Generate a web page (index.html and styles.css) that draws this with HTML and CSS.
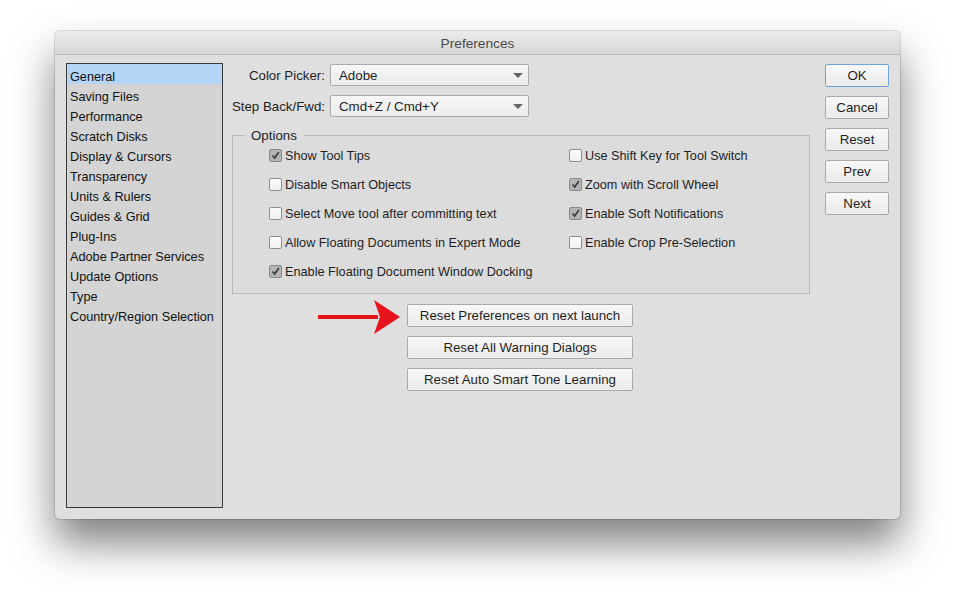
FILE: index.html
```html
<!DOCTYPE html>
<html lang="en">
<head>
    <meta charset="UTF-8">
    <title>Preferences</title>
    <link rel="stylesheet" href="styles.css">
</head>
<body>
    <div class="window">
        <!-- Title Bar -->
        <div class="titlebar">Preferences</div>

        <div class="window-body">
            <!-- Category List -->
            <ul class="category-list">
                <li class="selected">General</li>
                <li>Saving Files</li>
                <li>Performance</li>
                <li>Scratch Disks</li>
                <li>Display &amp; Cursors</li>
                <li>Transparency</li>
                <li>Units &amp; Rulers</li>
                <li>Guides &amp; Grid</li>
                <li>Plug-Ins</li>
                <li>Adobe Partner Services</li>
                <li>Update Options</li>
                <li>Type</li>
                <li>Country/Region Selection</li>
            </ul>

            <!-- General Settings -->
            <div class="settings">
                <div class="field-row">
                    <label class="field-label">Color Picker:</label>
                    <div class="select">Adobe<span class="caret"></span></div>
                </div>
                <div class="field-row">
                    <label class="field-label">Step Back/Fwd:</label>
                    <div class="select">Cmd+Z / Cmd+Y<span class="caret"></span></div>
                </div>

                <fieldset class="options">
                    <legend>Options</legend>
                    <div class="option-grid">
                        <div class="option"><span class="cb checked"><svg viewBox="0 0 13 13"><path d="M3 6.5 L5.5 9.5 L10.5 2.5" /></svg></span>Show Tool Tips</div>
                        <div class="option"><span class="cb"></span>Use Shift Key for Tool Switch</div>
                        <div class="option"><span class="cb"></span>Disable Smart Objects</div>
                        <div class="option"><span class="cb checked"><svg viewBox="0 0 13 13"><path d="M3 6.5 L5.5 9.5 L10.5 2.5" /></svg></span>Zoom with Scroll Wheel</div>
                        <div class="option"><span class="cb"></span>Select Move tool after committing text</div>
                        <div class="option"><span class="cb checked"><svg viewBox="0 0 13 13"><path d="M3 6.5 L5.5 9.5 L10.5 2.5" /></svg></span>Enable Soft Notifications</div>
                        <div class="option"><span class="cb"></span>Allow Floating Documents in Expert Mode</div>
                        <div class="option"><span class="cb"></span>Enable Crop Pre-Selection</div>
                        <div class="option"><span class="cb checked"><svg viewBox="0 0 13 13"><path d="M3 6.5 L5.5 9.5 L10.5 2.5" /></svg></span>Enable Floating Document Window Docking</div>
                    </div>
                </fieldset>

                <div class="reset-buttons">
                    <div class="arrow-wrap">
                        <svg class="arrow" viewBox="0 0 82 34">
                            <rect x="0" y="15" width="60" height="4" fill="#e8141b" />
                            <path d="M56 0 L82 17 L56 34 L62 17 Z" fill="#e8141b" />
                        </svg>
                        <button class="btn wide">Reset Preferences on next launch</button>
                    </div>
                    <button class="btn wide">Reset All Warning Dialogs</button>
                    <button class="btn wide">Reset Auto Smart Tone Learning</button>
                </div>
            </div>

            <!-- Dialog Buttons -->
            <div class="dialog-buttons">
                <button class="btn default">OK</button>
                <button class="btn">Cancel</button>
                <button class="btn">Reset</button>
                <button class="btn">Prev</button>
                <button class="btn">Next</button>
            </div>
        </div>
    </div>
</body>
</html>
```

FILE: styles.css
```css
* {
    margin: 0;
    padding: 0;
    box-sizing: border-box;
}

html,
body {
    height: 100%;
}

body {
    background: #fff;
    font-family: 'Liberation Sans', Arial, sans-serif;
    font-size: 13.3px;
    color: #1e1e1e;
    padding: 31px 0 0 55px;
    overflow: hidden;
}

/* Window */
.window {
    width: 845px;
    height: 488px;
    background: #dfdfdf;
    border-radius: 5px;
    box-shadow: 0 24px 42px rgba(0, 0, 0, 0.5), 0 0 0 1px rgba(0, 0, 0, 0.12);
    overflow: hidden;
}

.titlebar {
    height: 24px;
    line-height: 25px;
    font-size: 13.7px;
    text-align: center;
    color: #4a4a4a;
    background: linear-gradient(#ebebeb, #d6d6d6);
    border-bottom: 1px solid #b8b8b8;
}

.window-body {
    display: flex;
    padding: 8px 11px 11px 11px;
}

/* Category List */
.category-list {
    list-style: none;
    width: 157px;
    height: 445px;
    background: #d4d4d4;
    border: 1px solid #3a3a3a;
    font-size: 12.7px;
}

.category-list li {
    height: 20px;
    line-height: 14px;
    padding: 6px 0 0 3px;
    color: #111;
}

.category-list li.selected {
    background: #b5d5f7;
}

/* Settings Column */
.settings {
    width: 578px;
    margin-left: 9px;
    padding-top: 1px;
}

.field-row {
    display: flex;
    align-items: center;
    margin-bottom: 9px;
}

.field-label {
    display: flex;
    justify-content: flex-end;
    flex-shrink: 0;
    width: 93px;
    margin-right: 5px;
    white-space: nowrap;
}

.select {
    position: relative;
    width: 199px;
    height: 22px;
    line-height: 21px;
    padding-left: 8px;
    background: linear-gradient(#f7f7f7, #ececec);
    border: 1px solid #aaa;
    border-radius: 2px;
}

.caret {
    position: absolute;
    right: 5px;
    top: 8px;
    border-left: 5px solid transparent;
    border-right: 5px solid transparent;
    border-top: 5px solid #666;
}

/* Options Group */
.options {
    border: 1px solid #b9b9b9;
    height: 166px;
    padding: 0 0 0 36px;
    margin-top: 11px;
    background: #dcdcdc;
    font-size: 12.7px;
}

.options legend {
    margin-left: -25px;
    padding: 0 7px;
    font-size: 13.3px;
}

.option-grid {
    display: grid;
    grid-template-columns: 300px 1fr;
    grid-auto-rows: 29px;
    margin-top: -2px;
}

.option {
    display: flex;
    align-items: center;
    height: 29px;
}

.cb {
    width: 13px;
    height: 13px;
    margin-right: 3px;
    border: 1px solid #8e8e8e;
    border-radius: 2px;
    background: linear-gradient(#fdfdfd, #f0f0f0);
    display: flex;
}

.cb.checked {
    background: #b5b5b5;
    border-color: #888;
}

.cb svg {
    width: 11px;
    height: 11px;
}

.cb path {
    fill: none;
    stroke: #3c3c3c;
    stroke-width: 2;
}

/* Buttons */
.btn {
    font-family: inherit;
    font-size: 13.3px;
    color: #1e1e1e;
    height: 23px;
    background: linear-gradient(#f8f8f8, #ebebeb);
    border: 1px solid #a9a9a9;
    border-radius: 2px;
}

.btn.default {
    border-color: #6fa3d9;
}

.reset-buttons {
    display: flex;
    flex-direction: column;
    align-items: center;
    gap: 9px;
    margin-top: 10px;
    padding-right: 2px;
}

.btn.wide {
    width: 226px;
}

.arrow-wrap {
    position: relative;
}

.arrow {
    position: absolute;
    right: calc(100% + 7px);
    top: -4px;
    width: 82px;
    height: 34px;
}

.dialog-buttons {
    display: flex;
    flex-direction: column;
    gap: 9px;
    margin-left: 15px;
    padding-top: 1px;
}

.dialog-buttons .btn {
    width: 64px;
}
```
